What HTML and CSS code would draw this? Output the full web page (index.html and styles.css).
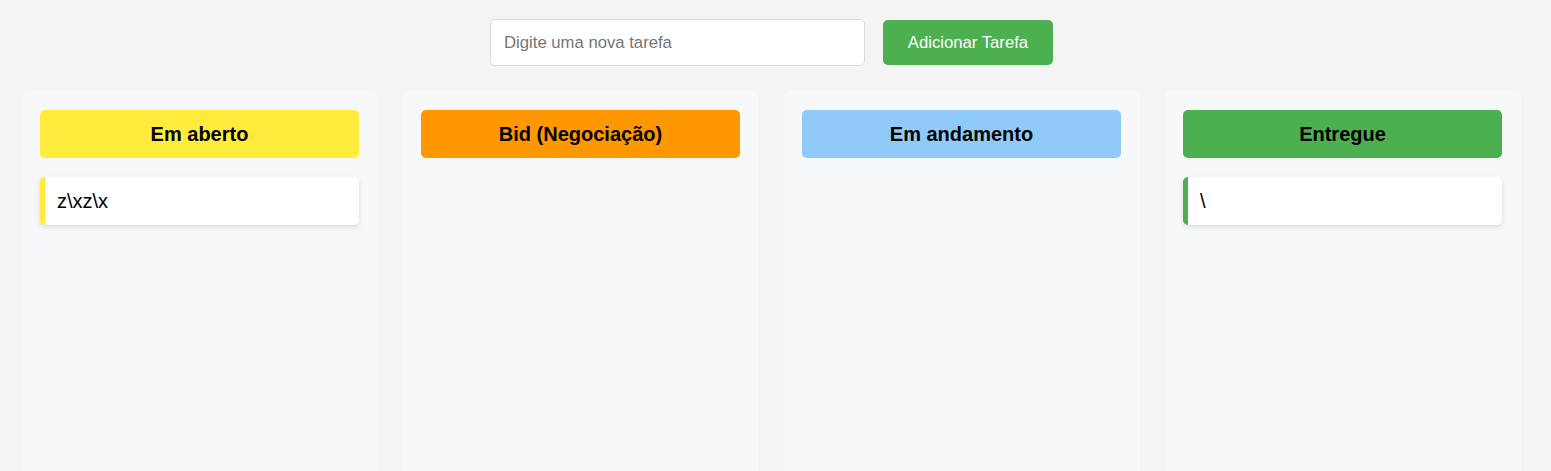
FILE: index.html
```html
<!DOCTYPE html>
<html lang="pt">
<head>
<meta charset="utf-8">
<title>Kanban</title>
<link rel="stylesheet" href="styles.css">
</head>
<body>
<div class="app">
  <div class="add-bar">
    <input class="task-input" type="text" placeholder="Digite uma nova tarefa">
    <button class="add-btn">Adicionar Tarefa</button>
  </div>
  <div class="board">
    <section class="column">
      <h2 class="col-title open">Em aberto</h2>
      <div class="card card-open">z\xz\x</div>
    </section>
    <section class="column">
      <h2 class="col-title bid">Bid (Negociação)</h2>
    </section>
    <section class="column">
      <h2 class="col-title progress">Em andamento</h2>
    </section>
    <section class="column">
      <h2 class="col-title done">Entregue</h2>
      <div class="card card-done">\</div>
    </section>
  </div>
</div>
</body>
</html>
```

FILE: styles.css
```css
* { box-sizing: border-box; }
html, body { margin: 0; padding: 0; }
body {
  background: #f4f4f4;
  font-family: "Liberation Sans", Arial, sans-serif;
  overflow: hidden;
}
.app {
  width: 1499px;
  margin-left: 22px;
  padding-top: 19px;
}
.add-bar {
  display: flex;
  justify-content: center;
  align-items: center;
  gap: 18px;
  margin-bottom: 25px;
}
.task-input {
  width: 375px;
  height: 47px;
  padding: 0 13px;
  border: 1px solid #dcdcdc;
  border-radius: 5px;
  background: #fff;
  font-family: "Liberation Sans", Arial, sans-serif;
  font-size: 16.7px;
  color: #333;
  outline: none;
}
.task-input::placeholder { color: #757575; }
.add-btn {
  width: 170px;
  height: 45px;
  border: none;
  border-radius: 5px;
  background: #4caf50;
  color: #fff;
  font-family: "Liberation Sans", Arial, sans-serif;
  font-size: 16.7px;
  cursor: pointer;
}
.board {
  display: grid;
  grid-template-columns: repeat(4, 356px);
  column-gap: 25px;
}
.column {
  background: #f7f8fa;
  border-radius: 6px;
  padding: 19px 19px 19px 18px;
  min-height: 500px;
}
.col-title {
  margin: 0 0 19px;
  height: 48px;
  display: flex;
  align-items: center;
  justify-content: center;
  border-radius: 5px;
  font-size: 20px;
  font-weight: bold;
  color: #000;
}
.open { background: #ffeb3b; }
.bid { background: #ff9800; }
.progress { background: #90caf9; }
.done { background: #4caf50; }
.card {
  height: 48px;
  display: flex;
  align-items: center;
  padding: 0 12px;
  background: #fff;
  border-radius: 5px;
  box-shadow: 0 2px 5px rgba(0, 0, 0, 0.12);
  font-size: 20px;
  color: #000;
  margin-bottom: 10px;
}
.card-open { border-left: 5px solid #ffeb3b; }
.card-done { border-left: 5px solid #4caf50; }
```
